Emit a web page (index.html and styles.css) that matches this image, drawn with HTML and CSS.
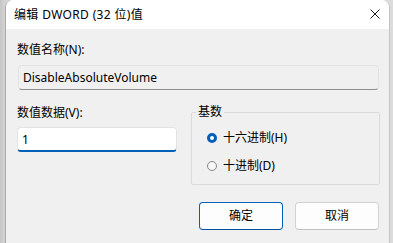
FILE: index.html
```html
<!DOCTYPE html>
<html lang="zh-CN">
<head>
<meta charset="utf-8">
<link rel="stylesheet" href="styles.css">
</head>
<body>
<div class="window">
  <div class="titlebar">
    <span class="title">编辑 DWORD (32 位)值</span>
    <span class="close"><svg width="10" height="10" viewBox="0 0 10 10"><path d="M0.5 0.5 L9.5 9.5 M9.5 0.5 L0.5 9.5" stroke="#1a1a1a" stroke-width="1" fill="none"/></svg></span>
  </div>
  <div class="content">
    <div class="field">
      <label class="lbl">数值名称(N):</label>
      <div class="input readonly">DisableAbsoluteVolume</div>
    </div>
    <div class="row">
      <div class="col">
        <label class="lbl">数值数据(V):</label>
        <div class="input edit">1</div>
      </div>
      <fieldset class="base">
        <legend>基数</legend>
        <div class="radio"><span class="dot on"></span><span>十六进制(H)</span></div>
        <div class="radio second"><span class="dot"></span><span>十进制(D)</span></div>
      </fieldset>
    </div>
    <div class="buttons">
      <button class="btn primary">确定</button>
      <button class="btn">取消</button>
    </div>
  </div>
</div>
</body>
</html>
```
FILE: styles.css
```css
html, body {
  margin: 0;
  height: 100%;
  overflow: hidden;
}
body {
  background: linear-gradient(to right, #c6c6c6 0, #d4d4d4 5px, #dcdcdc 100%);
  font-family: "Noto Sans", "Noto Sans CJK SC", sans-serif;
  font-size: 12px;
  color: #000;
}
.window {
  margin-left: 5px;
  width: 385px;
  height: 243px;
  box-sizing: border-box;
  border-left: 1px solid #a9a9a9;
  border-right: 1px solid #c2c2c2;
  border-radius: 8px 8px 0 0;
  background: #f0f0f0;
  overflow: hidden;
}
.titlebar {
  height: 29px;
  background: #fff;
  display: flex;
  justify-content: space-between;
  align-items: center;
  padding: 0 9px 0 8px;
}
.title {
  line-height: 16px;
  letter-spacing: 0.35px;
}
.close {
  align-self: flex-start;
  margin-top: 9px;
  width: 10px;
  height: 10px;
  display: flex;
}
.content {
  padding: 13px 9px 0 11px;
}
.lbl {
  display: block;
  line-height: 16px;
  height: 16px;
}
.field .lbl {
  margin-bottom: 7px;
}
.input {
  height: 25px;
  box-sizing: border-box;
  border: 1px solid #e3e3e3;
  border-radius: 4px;
  padding-left: 4px;
  display: flex;
  align-items: center;
  line-height: 16px;
}
.readonly {
  margin-left: 1px;
  margin-right: 1px;
  background: #f0f0f0;
  border-bottom-color: #8c8c8c;
}
.edit {
  width: 160px;
  background: #fff;
  border-bottom: 2px solid #005fb8;
  padding-top: 1px;
}
.row {
  display: flex;
  gap: 14px;
  margin-top: 15px;
  align-items: flex-start;
}
.col {
  width: 160px;
  flex: none;
}
.col .lbl {
  margin-bottom: 6px;
}
.base {
  flex: 1;
  min-width: 0;
  margin: -1px 0 0 0;
  padding: 10px 0 10px 0;
  border: 1px solid #dadada;
  border-radius: 2px;
}
.base legend {
  padding: 0 2px;
  margin-left: 4px;
  line-height: 16px;
}
.radio {
  display: flex;
  align-items: center;
  gap: 6px;
  height: 16px;
  line-height: 16px;
  padding-left: 15px;
}
.radio.second {
  margin-top: 12px;
}
.dot {
  width: 10px;
  height: 10px;
  box-sizing: border-box;
  border-radius: 50%;
  border: 1px solid #878787;
  background: #f7f7f7;
  flex: none;
}
.dot.on {
  border: 3px solid #005fb8;
  background: #fff;
}
.buttons {
  display: flex;
  justify-content: flex-end;
  gap: 12px;
  margin-top: 17px;
  padding-right: 1px;
}
.btn {
  width: 84px;
  height: 28px;
  box-sizing: border-box;
  border: 1px solid #d2d2d2;
  border-bottom-color: #c2c2c2;
  border-radius: 4px;
  background: #fdfdfd;
  font-family: inherit;
  font-size: 12px;
  color: #000;
  padding: 0;
  line-height: 16px;
}
.btn.primary {
  border-color: #005fb8;
  border-bottom-color: #004f9a;
}
```
